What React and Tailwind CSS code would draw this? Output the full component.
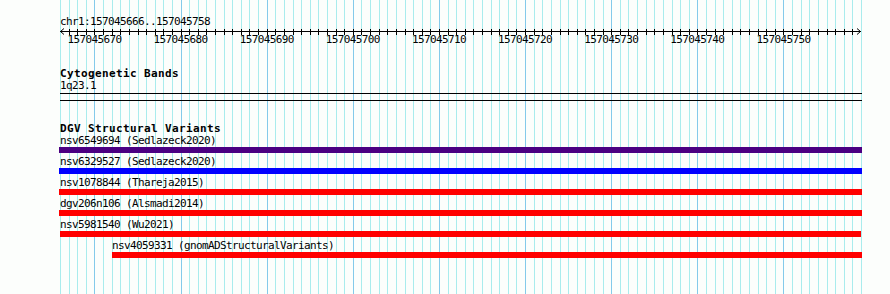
import React from "react";

const START = 157045666;
const END = 157045758;
const LEFT = 60;
const PX = 801 / (END - START + 1);

const bases = Array.from({ length: END - START + 2 }, (_, k) => k);

const features = [
  { name: "nsv6549694 (Sedlazeck2020)", color: "bg-[#4b0082]", left: -1, width: 803 },
  { name: "nsv6329527 (Sedlazeck2020)", color: "bg-[#0000ff]", left: -1, width: 803 },
  { name: "nsv1078844 (Thareja2015)", color: "bg-[#ff0000]", left: -1, width: 803 },
  { name: "dgv206n106 (Alsmadi2014)", color: "bg-[#ff0000]", left: -1, width: 803 },
  { name: "nsv5981540 (Wu2021)", color: "bg-[#ff0000]", left: 0, width: 801 },
  { name: "nsv4059331 (gnomADStructuralVariants)", color: "bg-[#ff0000]", left: 52, width: 750 },
];

const GridLines = () => (
  <svg className="absolute inset-0" width="890" height="294" shapeRendering="crispEdges">
    {bases.map((k) => {
      const x = Math.round(LEFT + k * PX) + 0.5;
      const major = (START + k) % 10 === 0;
      return (
        <line
          key={k}
          x1={x}
          x2={x}
          y1="0"
          y2="294"
          stroke={major ? "#84caea" : "#a9eced"}
          strokeWidth="1"
        />
      );
    })}
  </svg>
);

const Ruler = () => {
  const y = 3.5;
  return (
    <svg width="803" height="18" className="block overflow-visible" shapeRendering="crispEdges">
      <line x1="0" x2="801" y1={y} y2={y} stroke="#000" />
      <polyline points="4,0.5 0.5,3.5 4,6.5" fill="none" stroke="#000" shapeRendering="auto" />
      <polyline points="797,0.5 800.5,3.5 797,6.5" fill="none" stroke="#000" shapeRendering="auto" />
      {bases.slice(1, -1).map((k) => {
        const x = Math.round(k * PX) + 0.5;
        return <line key={k} x1={x} x2={x} y1="1" y2="7" stroke="#000" />;
      })}
      {bases
        .filter((k) => (START + k) % 10 === 0)
        .map((k) => (
          <text
            key={k}
            x={k * PX}
            y="15"
            textAnchor="middle"
            fontFamily="'DejaVu Sans Mono', monospace"
            fontSize="11"
            letterSpacing="-0.62"
            fill="#000"
          >
            {START + k}
          </text>
        ))}
    </svg>
  );
};

export default function App() {
  return (
    <div className="relative w-[890px] h-[294px] overflow-hidden bg-[#fcfefc] font-['DejaVu_Sans_Mono',monospace] text-[11px] leading-[12px] tracking-[-0.62px] text-black">
      <GridLines />
      <div className="relative flex flex-col pl-[60px] pt-[16px]">
        <div>chr1:157045666..157045758</div>
        <Ruler />

        {/* cytobands */}
        <div className="mt-[22px] font-bold tracking-[0.38px]">Cytogenetic Bands</div>
        <div>1q23.1</div>
        <div className="mt-[1px] h-[8px] w-[802px] border-y border-black" />

        {/* structural variants */}
        <div className="mt-[22px] font-bold tracking-[0.38px]">DGV Structural Variants</div>
        {features.map((f) => (
          <div key={f.name} className="mb-[3px]" style={{ marginLeft: f.left }}>
            <div style={{ marginLeft: f.left < 0 ? 1 : 0 }}>{f.name}</div>
            <div className={`h-[6px] ${f.color}`} style={{ width: f.width }} />
          </div>
        ))}
      </div>
    </div>
  );
}
